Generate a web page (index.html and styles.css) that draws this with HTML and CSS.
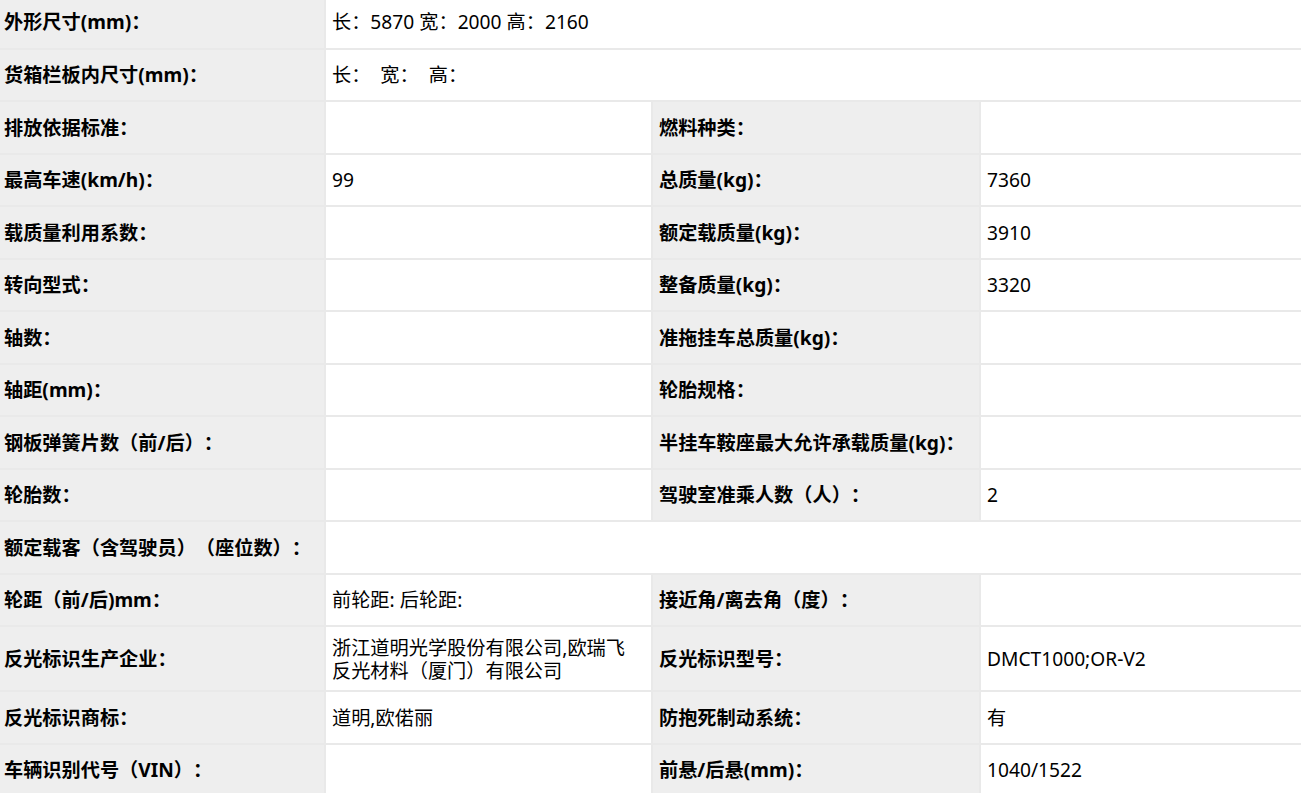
FILE: index.html
```html
<!DOCTYPE html>
<html lang="zh">
<head>
<meta charset="utf-8">
<link rel="stylesheet" href="styles.css">
</head>
<body>
<table class="spec">
  <colgroup>
    <col class="c1"><col class="c2"><col class="c3"><col class="c4">
  </colgroup>
  <tr class="first"><td class="lab">外形尺寸(mm)：</td><td class="val" colspan="3">长：5870 宽：2000 高：2160</td></tr>
  <tr><td class="lab">货箱栏板内尺寸(mm)：</td><td class="val" colspan="3">长： &nbsp;宽： &nbsp;高：</td></tr>
  <tr><td class="lab">排放依据标准：</td><td class="val"></td><td class="lab">燃料种类：</td><td class="val"></td></tr>
  <tr><td class="lab">最高车速(km/h)：</td><td class="val">99</td><td class="lab">总质量(kg)：</td><td class="val">7360</td></tr>
  <tr><td class="lab">载质量利用系数：</td><td class="val"></td><td class="lab">额定载质量(kg)：</td><td class="val">3910</td></tr>
  <tr><td class="lab">转向型式：</td><td class="val"></td><td class="lab">整备质量(kg)：</td><td class="val">3320</td></tr>
  <tr><td class="lab">轴数：</td><td class="val"></td><td class="lab">准拖挂车总质量(kg)：</td><td class="val"></td></tr>
  <tr><td class="lab">轴距(mm)：</td><td class="val"></td><td class="lab">轮胎规格：</td><td class="val"></td></tr>
  <tr><td class="lab">钢板弹簧片数（前/后）：</td><td class="val"></td><td class="lab">半挂车鞍座最大允许承载质量(kg)：</td><td class="val"></td></tr>
  <tr><td class="lab">轮胎数：</td><td class="val"></td><td class="lab">驾驶室准乘人数（人）：</td><td class="val">2</td></tr>
  <tr><td class="lab">额定载客（含驾驶员）（座位数）：</td><td class="val" colspan="3"></td></tr>
  <tr><td class="lab">轮距（前/后)mm：</td><td class="val">前轮距: 后轮距:</td><td class="lab">接近角/离去角（度）：</td><td class="val"></td></tr>
  <tr class="tall"><td class="lab">反光标识生产企业：</td><td class="val">浙江道明光学股份有限公司,欧瑞飞反光材料（厦门）有限公司</td><td class="lab">反光标识型号：</td><td class="val">DMCT1000;OR-V2</td></tr>
  <tr><td class="lab">反光标识商标：</td><td class="val">道明,欧偌丽</td><td class="lab">防抱死制动系统：</td><td class="val">有</td></tr>
  <tr><td class="lab">车辆识别代号（VIN）：</td><td class="val"></td><td class="lab">前悬/后悬(mm)：</td><td class="val">1040/1522</td></tr>
</table>
</body>
</html>
```

FILE: styles.css
```css
html, body {
  margin: 0;
  padding: 0;
  background: #ffffff;
  overflow: hidden;
}

.spec {
  width: 1302px;
  margin-top: -4px;
  border-collapse: collapse;
  table-layout: fixed;
  font-family: "Noto Sans", "Noto Sans CJK SC", sans-serif;
  font-size: 19.2px;
  color: #000;
  text-spacing-trim: space-all;
}

.c1 { width: 325px; }
.c2 { width: 327px; }
.c3 { width: 328px; }
.c4 { width: 322px; }

.spec tr {
  height: 52.5px;
}

.spec tr.tall {
  height: 65px;
}

.spec td {
  border: 2px solid #e9e9e9;
  border-top: 0;
  padding: 0 8px 0 6px;
  vertical-align: middle;
  line-height: 23px;
  word-break: break-all;
}

.spec td:first-child {
  padding-left: 4px;
  border-left: 0;
}

.spec td:last-child {
  border-right: 0;
}

.lab {
  background: #eeeeee;
  font-weight: bold;
  white-space: nowrap;
}

.val {
  background: #ffffff;
  font-weight: normal;
}
```
